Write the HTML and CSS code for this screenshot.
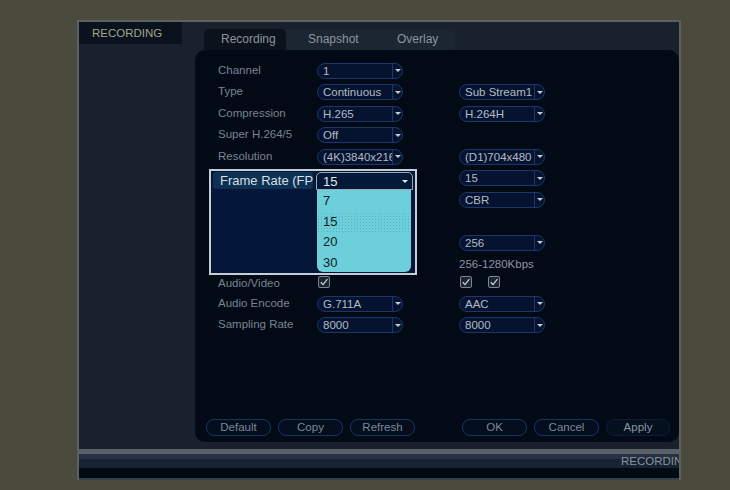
FILE: index.html
```html
<!DOCTYPE html>
<html>
<head>
<meta charset="utf-8">
<link rel="stylesheet" href="styles.css">
</head>
<body>
<div class="window">
  <div class="main">
    <aside class="sidebar"><div class="side-title">RECORDING</div></aside>
    <section class="content">
      <nav class="tabs">
        <div class="tab active">Recording</div>
        <div class="tab-rest">
          <div class="tab snap">Snapshot</div>
          <div class="tab over">Overlay</div>
        </div>
      </nav>
      <div class="panel">
        <div class="form">
          <div class="lbl">Channel</div><div class="select"><span class="val">1</span><span class="arrow"></span></div><div></div><div></div>
          <div class="lbl">Type</div><div class="select"><span class="val">Continuous</span><span class="arrow"></span></div><div></div><div class="select"><span class="val">Sub Stream1</span><span class="arrow"></span></div>
          <div class="lbl">Compression</div><div class="select"><span class="val">H.265</span><span class="arrow"></span></div><div></div><div class="select"><span class="val">H.264H</span><span class="arrow"></span></div>
          <div class="lbl">Super H.264/5</div><div class="select"><span class="val">Off</span><span class="arrow"></span></div><div></div><div></div>
          <div class="lbl">Resolution</div><div class="select"><span class="val">(4K)3840x2160</span><span class="arrow"></span></div><div></div><div class="select"><span class="val">(D1)704x480</span><span class="arrow"></span></div>
          <div></div><div></div><div></div><div class="select"><span class="val">15</span><span class="arrow"></span></div>
          <div></div><div></div><div></div><div class="select"><span class="val">CBR</span><span class="arrow"></span></div>
          <div></div><div></div><div></div><div></div>
          <div></div><div></div><div></div><div class="select"><span class="val">256</span><span class="arrow"></span></div>
          <div></div><div></div><div></div><div class="note">256-1280Kbps</div>
          <div class="lbl">Audio/Video</div>
          <div class="checks"><span class="check"><svg width="12" height="12" viewBox="0 0 12 12"><path d="M2.8 6.2 L5 8.6 L9.4 3.2" fill="none" stroke="#c9d1d9" stroke-width="1.3"/></svg></span></div>
          <div></div>
          <div class="checks"><span class="check"><svg width="12" height="12" viewBox="0 0 12 12"><path d="M2.8 6.2 L5 8.6 L9.4 3.2" fill="none" stroke="#c9d1d9" stroke-width="1.3"/></svg></span><span class="check"><svg width="12" height="12" viewBox="0 0 12 12"><path d="M2.8 6.2 L5 8.6 L9.4 3.2" fill="none" stroke="#c9d1d9" stroke-width="1.3"/></svg></span></div>
          <div class="lbl">Audio Encode</div><div class="select"><span class="val">G.711A</span><span class="arrow"></span></div><div></div><div class="select"><span class="val">AAC</span><span class="arrow"></span></div>
          <div class="lbl">Sampling Rate</div><div class="select"><span class="val">8000</span><span class="arrow"></span></div><div></div><div class="select"><span class="val">8000</span><span class="arrow"></span></div>
        </div>

        <div class="popup">
          <div class="pop-label">Frame Rate (FP</div>
          <div class="pop-col">
            <div class="pop-select"><span class="pop-val">15</span><span class="pop-arrow"></span></div>
            <ul class="pop-list">
              <li>7</li>
              <li class="hover">15</li>
              <li>20</li>
              <li>30</li>
            </ul>
          </div>
        </div>

        <div class="buttons">
          <div class="btn">Default</div>
          <div class="btn">Copy</div>
          <div class="btn">Refresh</div>
          <div class="btn ok">OK</div>
          <div class="btn">Cancel</div>
          <div class="btn apply">Apply</div>
        </div>
      </div>
    </section>
  </div>
  <div class="status">
    <div class="status-gray"></div>
    <div class="status-text">RECORDIN</div>
    <div class="status-foot"></div>
  </div>
</div>
</body>
</html>
```

FILE: styles.css
```css
html, body {
  margin: 0;
  padding: 0;
}
body {
  width: 730px;
  height: 490px;
  overflow: hidden;
  background: #4b4b3d;
  font-family: "Liberation Sans", Arial, sans-serif;
}
.window {
  box-sizing: border-box;
  width: 604px;
  height: 460px;
  margin: 20px 0 0 77px;
  border: 2px solid #5d6165;
  border-bottom: 0;
  background: #19212d;
  display: flex;
  flex-direction: column;
  overflow: hidden;
}
.main {
  display: flex;
  height: 427px;
  flex: none;
}
.sidebar {
  width: 116px;
  flex: none;
}
.side-title {
  box-sizing: border-box;
  width: 103px;
  height: 22px;
  padding-left: 13px;
  background: #0a121e;
  color: #a3a58b;
  font-size: 11.5px;
  line-height: 22px;
}
.content {
  flex: 1;
  display: flex;
  flex-direction: column;
}
.tabs {
  box-sizing: border-box;
  height: 28px;
  padding: 7px 0 0 9px;
  display: flex;
}
.tab {
  box-sizing: border-box;
  height: 21px;
  line-height: 21px;
  font-size: 12px;
  color: #8c949c;
}
.tab.active {
  width: 82px;
  padding-left: 17px;
  background: #0b121c;
  border-radius: 5px 5px 0 0;
}
.tab-rest {
  display: flex;
  width: 169px;
  background: #1c2532;
}
.tab.snap {
  width: 89px;
  padding-left: 22px;
}
.tab.over {
  width: 80px;
  padding-left: 22px;
}
.panel {
  position: relative;
  height: 392px;
  background: #020a16;
  border-radius: 10px;
  display: flex;
  flex-direction: column;
}
.form {
  flex: 1;
  box-sizing: border-box;
  padding: 10px 0 0 23px;
  display: grid;
  grid-template-columns: 99px 86px 56px 86px;
  grid-template-rows: repeat(10, 21.5px) 18px 21.5px 21.5px;
  align-content: start;
  align-items: center;
}
.lbl {
  font-size: 11.5px;
  color: #7a8490;
  white-space: nowrap;
  margin-top: -2px;
}
.note {
  font-size: 11.5px;
  color: #8d95a1;
  white-space: nowrap;
}
.select {
  box-sizing: border-box;
  width: 86px;
  height: 16px;
  border: 1px solid #1b3767;
  border-radius: 8px;
  background: #051330;
  display: flex;
  align-items: stretch;
  overflow: hidden;
}
.val {
  flex: 1;
  padding-left: 5px;
  font-size: 11.5px;
  line-height: 14px;
  color: #b3bbc3;
  white-space: nowrap;
  overflow: hidden;
}
.arrow {
  flex: none;
  width: 9px;
  border-left: 1px solid #1b3767;
  display: flex;
  align-items: center;
  justify-content: center;
}
.arrow::after {
  content: "";
  border-left: 3px solid transparent;
  border-right: 3px solid transparent;
  border-top: 3px solid #c3cbd3;
}
.checks {
  display: flex;
  gap: 16px;
  padding-left: 1px;
  align-self: start;
  margin-top: 1px;
}
.check {
  box-sizing: border-box;
  width: 12px;
  height: 12px;
  border: 1px solid #7d8792;
  border-radius: 2px;
  background: #1b2531;
  display: flex;
}
.check svg {
  margin: -1px;
}
.popup {
  position: absolute;
  left: 14px;
  top: 119px;
  box-sizing: border-box;
  width: 208px;
  height: 106px;
  border: 2px solid #c6cdd5;
  background: #04173a;
  padding: 1px 0 0 2px;
  display: flex;
  gap: 3px;
  align-items: flex-start;
}
.pop-label {
  box-sizing: border-box;
  width: 100px;
  height: 17px;
  padding-left: 7px;
  background: #0d3153;
  border-radius: 3px;
  color: #d6dee6;
  font-size: 13px;
  line-height: 17px;
  white-space: nowrap;
}
.pop-col {
  width: 97px;
  display: flex;
  flex-direction: column;
}
.pop-select {
  box-sizing: border-box;
  height: 18px;
  border: 1px solid #9aa8b8;
  border-radius: 5px 5px 0 0;
  background: #041838;
  display: flex;
  align-items: center;
  padding: 0 4px 0 6px;
}
.pop-val {
  flex: 1;
  color: #e2e8ee;
  font-size: 13px;
}
.pop-arrow {
  border-left: 3px solid transparent;
  border-right: 3px solid transparent;
  border-top: 3px solid #e6ebf0;
}
.pop-list {
  list-style: none;
  margin: 0 0 0 1px;
  padding: 1px 0 0 0;
  box-sizing: border-box;
  width: 94px;
  height: 82px;
  background: #6dcfd9;
  border-radius: 0 0 6px 6px;
}
.pop-list li {
  height: 20.5px;
  line-height: 20.5px;
  padding-left: 6px;
  font-size: 13px;
  color: #0e1c26;
}
.pop-list li.hover {
  background-color: #6dcfd9;
  background-image: radial-gradient(circle, #55b3c0 0.8px, transparent 1px);
  background-size: 3px 3px;
}
.buttons {
  display: flex;
  gap: 7px;
  padding: 0 0 6px 11px;
}
.btn {
  box-sizing: border-box;
  width: 65px;
  height: 17px;
  border: 1px solid #183462;
  border-radius: 8px;
  background: #030d1d;
  color: #7c8999;
  font-size: 11.5px;
  line-height: 15px;
  text-align: center;
}
.btn.ok {
  margin-left: 40px;
}
.btn.apply {
  width: 64px;
  background: #05101f;
  border-color: #0e1d36;
  color: #8795a4;
}
.status {
  flex: 1;
  display: flex;
  flex-direction: column;
}
.status-gray {
  height: 5px;
  background: #5d6165;
}
.status-text {
  height: 14px;
  box-sizing: border-box;
  padding-left: 542px;
  background: linear-gradient(#243242 0 5px, #162333 5px);
  color: #8b939b;
  font-size: 11.5px;
  line-height: 15px;
  white-space: nowrap;
  overflow: hidden;
}
.status-foot {
  flex: 1;
  background: #020a14;
  border-bottom: 2px solid #36414d;
}
```
